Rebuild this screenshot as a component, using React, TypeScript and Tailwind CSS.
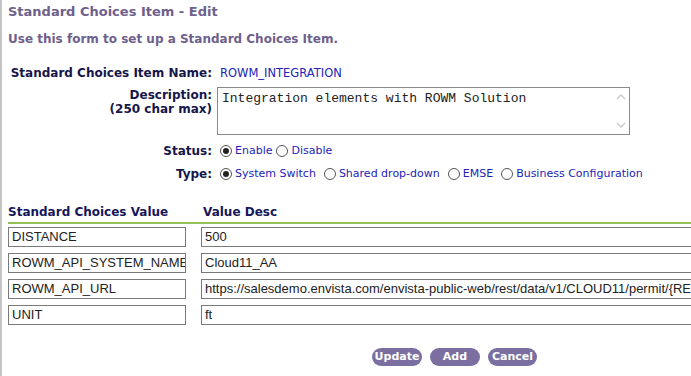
import React from "react";

const rows = [
  { key: "DISTANCE", desc: "500" },
  { key: "ROWM_API_SYSTEM_NAME", desc: "Cloud11_AA" },
  {
    key: "ROWM_API_URL",
    desc: "https://salesdemo.envista.com/envista-public-web/rest/data/v1/CLOUD11/permit/{RECORD_ID}",
  },
  { key: "UNIT", desc: "ft" },
];

function Radio({ checked }: { checked?: boolean }) {
  return (
    <span className="inline-flex w-[12px] h-[12px] rounded-full border border-[#555] bg-white items-center justify-center shrink-0">
      {checked && <span className="w-[6px] h-[6px] rounded-full bg-[#222]" />}
    </span>
  );
}

function Option({ label, checked }: { label: string; checked?: boolean }) {
  return (
    <span className="inline-flex items-center gap-[3px]">
      <Radio checked={checked} />
      <span>{label}</span>
    </span>
  );
}

export default function App() {
  return (
    <div className="w-[691px] h-[376px] overflow-hidden bg-white border-l-2 border-[#c4c4c4] font-['DejaVu_Sans',sans-serif]">
      <div className="pl-[6px] pt-[4px]">
        {/* Header */}
        <h1 className="text-[13px] font-bold text-[#6e5f8c] leading-[16px]">
          Standard Choices Item - Edit
        </h1>
        <p className="mt-[11px] text-[12px] font-bold text-[#6e5f8c] leading-[16px]">
          Use this form to set up a Standard Choices Item.
        </p>

        {/* Item fields */}
        <div className="mt-[19px] grid grid-cols-[204px_1fr] gap-x-[5px] text-[11px]">
          <div className="text-right font-bold text-[#16164a] text-[12px] leading-[15px]">
            Standard Choices Item Name:
          </div>
          <div className="text-[#2323b8] text-[11.5px] leading-[15px] pl-[3px]">ROWM_INTEGRATION</div>

          <div className="mt-[6px] text-right font-bold text-[#16164a] text-[12px] leading-[14px] pt-[1px]">
            Description:
            <br />
            (250 char max)
          </div>
          <div className="mt-[6px]">
            <div className="relative w-[413px] h-[48px] border border-[#8a8a8a] bg-white">
              <div className="pl-[4px] pt-[3px] font-['Liberation_Mono',monospace] text-[13px] leading-[16px] text-[#222]">
                Integration elements with ROWM Solution
              </div>
              <svg className="absolute right-[3px] top-[6px]" width="10" height="6" viewBox="0 0 10 6">
                <path d="M1 5 L5 1 L9 5" fill="none" stroke="#c8c8c8" strokeWidth="1.3" />
              </svg>
              <svg className="absolute right-[3px] bottom-[6px]" width="10" height="6" viewBox="0 0 10 6">
                <path d="M1 1 L5 5 L9 1" fill="none" stroke="#c8c8c8" strokeWidth="1.3" />
              </svg>
            </div>
          </div>

          <div className="mt-[8px] text-right font-bold text-[#16164a] text-[12px] leading-[16px]">
            Status:
          </div>
          <div className="mt-[8px] flex items-center gap-[4px] text-[#2323b8] leading-[16px] pl-[3px]">
            <Option label="Enable" checked />
            <Option label="Disable" />
          </div>

          <div className="mt-[7px] text-right font-bold text-[#16164a] text-[12px] leading-[16px]">
            Type:
          </div>
          <div className="mt-[7px] flex items-center gap-[8px] text-[#2323b8] leading-[16px] pl-[3px]">
            <Option label="System Switch" checked />
            <Option label="Shared drop-down" />
            <Option label="EMSE" />
            <Option label="Business Configuration" />
          </div>
        </div>

        {/* Values table */}
        <div className="mt-[22px]">
          <div className="flex text-[12px] font-bold text-[#16165a] leading-[16px] pb-[2px] border-b-2 border-[#93c257]">
            <div className="w-[195px] shrink-0">Standard Choices Value</div>
            <div>Value Desc</div>
          </div>
          <div className="mt-[3px] flex flex-col gap-[6px] font-['Liberation_Sans',sans-serif] text-[13px] text-[#222]">
            {rows.map((r) => (
              <div key={r.key} className="flex gap-[15px]">
                <div className="w-[178px] h-[20px] shrink-0 border border-[#7a7a7a] px-[3px] leading-[18px] overflow-hidden whitespace-nowrap">
                  {r.key}
                </div>
                <div className="w-[520px] h-[20px] shrink-0 border border-[#7a7a7a] px-[3px] leading-[18px] overflow-hidden whitespace-nowrap">
                  {r.desc}
                </div>
              </div>
            ))}
          </div>
        </div>

        {/* Actions */}
        <div className="mt-[23px] flex gap-[8px] pl-[364px] text-[11px] font-bold text-white">
          <span className="w-[50px] h-[18px] rounded-full bg-[#7a6fa0] flex items-center justify-center">Update</span>
          <span className="w-[50px] h-[18px] rounded-full bg-[#7a6fa0] flex items-center justify-center">Add</span>
          <span className="w-[49px] h-[18px] rounded-full bg-[#7a6fa0] flex items-center justify-center">Cancel</span>
        </div>
      </div>
    </div>
  );
}
